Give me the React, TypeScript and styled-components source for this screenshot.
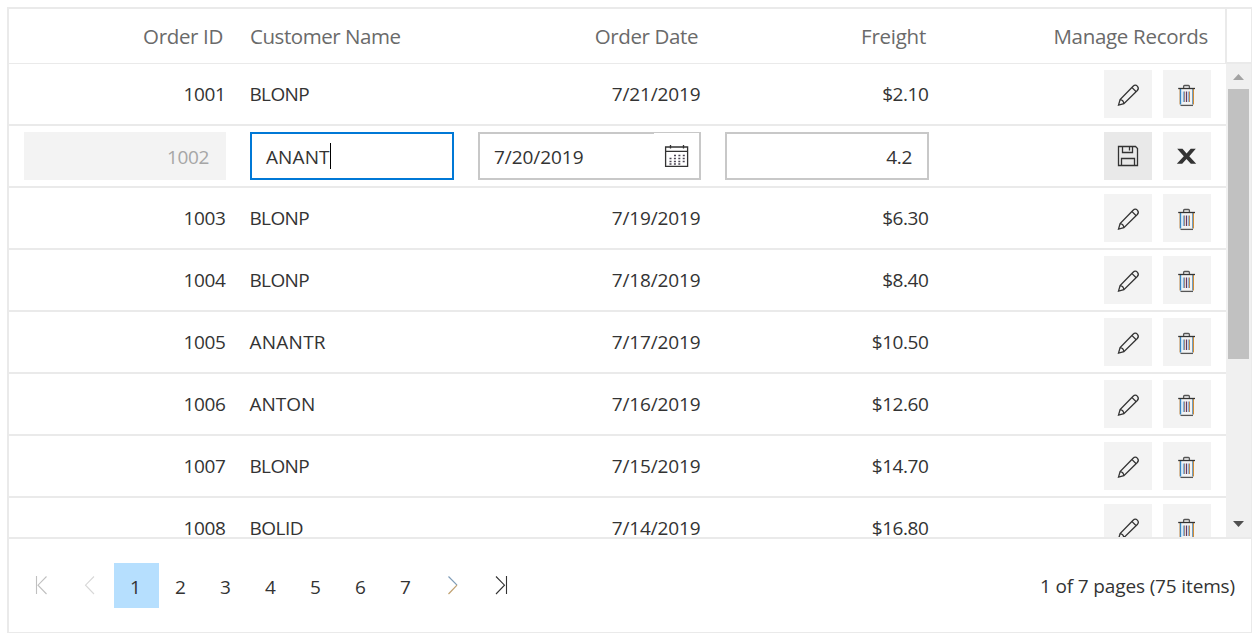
import React from 'react';
import styled, { createGlobalStyle } from 'styled-components';

const Global = createGlobalStyle`
  *, *::before, *::after { box-sizing: border-box; }
  body { margin: 0; background: #fff; font-family: 'Open Sans', 'Noto Sans', sans-serif; color: #333; }
`;

const columns = '229px 228px 247px 228px 285px';

const Grid = styled.div`
  width: 1245px;
  height: 626px;
  margin: 7px 0 0 7px;
  border: 2px solid #eaeaea;
  border-right-width: 1px;
  border-bottom-width: 1px;
  display: flex;
  flex-direction: column;
  overflow: hidden;
`;

const Header = styled.div`
  display: flex;
  height: 55px;
  flex: none;
`;

const HeaderRow = styled.div`
  display: grid;
  grid-template-columns: ${columns};
  width: 1216px;
  border-bottom: 1px solid #eaeaea;
  overflow: hidden;
`;

const HeaderCorner = styled.div`
  flex: 1;
  border-left: 2px solid #eaeaea;
  border-bottom: 2px solid #eaeaea;
`;

const HeaderCell = styled.div<{ $left?: boolean; $pad?: number; $ls: number }>`
  display: flex;
  align-items: center;
  justify-content: ${p => (p.$left ? 'flex-start' : 'flex-end')};
  padding: 0 ${p => p.$pad ?? 15}px 1px 12px;
  font-size: 20.5px;
  line-height: 28px;
  letter-spacing: ${p => p.$ls}px;
  color: #6a6a6a;
  white-space: nowrap;
`;

const Content = styled.div`
  display: flex;
  height: 473px;
  flex: none;
`;

const Rows = styled.div`
  width: 1217px;
  height: 473px;
  overflow: hidden;
`;

const Row = styled.div`
  display: grid;
  grid-template-columns: ${columns};
  height: 62px;
  border-bottom: 2px solid #eaeaea;
`;

const Cell = styled.div<{ $left?: boolean; $ls?: number }>`
  display: flex;
  align-items: center;
  justify-content: ${p => (p.$left ? 'flex-start' : 'flex-end')};
  padding: 0 12.5px 0 11.5px;
  font-size: 19px;
  line-height: 26px;
  letter-spacing: ${p => p.$ls ?? -0.36}px;
  white-space: nowrap;
`;

const EditCell = styled.div<{ $first?: boolean }>`
  display: flex;
  align-items: center;
  padding: 0 12px 0 ${p => (p.$first ? 15 : 12)}px;
`;

const Field = styled.div<{ $kind?: 'focus' | 'disabled'; $right?: boolean; $ls?: number }>`
  display: flex;
  flex: 1;
  align-items: center;
  justify-content: ${p => (p.$right ? 'flex-end' : 'flex-start')};
  height: 48px;
  padding: 2px 15px 0 14px;
  border: 2px solid ${p => (p.$kind === 'focus' ? '#0078d6' : p.$kind === 'disabled' ? '#f3f3f3' : '#c8c8c8')};
  background: ${p => (p.$kind === 'disabled' ? '#f3f3f3' : '#fff')};
  color: ${p => (p.$kind === 'disabled' ? '#a6a6a6' : '#333')};
  font-size: 19px;
  line-height: 26px;
  letter-spacing: ${p => p.$ls ?? -0.36}px;
`;

const Caret = styled.span`
  width: 1px;
  height: 26px;
  background: #000;
  margin-top: -3px;
`;

const DateField = styled(Field)`
  padding-right: 0;
`;

const DateButton = styled.span`
  display: flex;
  width: 45px;
  height: 45px;
  margin: -3px 0 0 auto;
  background: #fff;
`;

const Actions = styled.div`
  display: flex;
  align-items: center;
  justify-content: flex-end;
  gap: 11px;
  padding-right: 15px;
`;

const ActionButton = styled.span<{ $active?: boolean }>`
  display: block;
  width: 48px;
  height: 48px;
  background: ${p => (p.$active ? '#e9e9e9' : '#f3f3f3')};
`;

const Icon = styled.svg`
  display: block;
  fill: none;
  stroke: #333;
  stroke-width: 1.3;
`;

const Scrollbar = styled.div`
  width: 25px;
  display: flex;
  flex-direction: column;
  align-items: center;
  background: #f0f0f0;
`;

const ScrollArrow = styled.svg`
  display: block;
  flex: none;
`;

const Thumb = styled.div`
  width: 21px;
  height: 270px;
  margin-left: -1px;
  background: #c1c1c1;
`;

const Track = styled.div`
  flex: 1;
`;

const Pager = styled.div`
  display: flex;
  align-items: center;
  flex: 1;
  border-top: 2px solid #eaeaea;
  padding: 0 16px 0 9px;
`;

const PagerArrow = styled.span`
  display: block;
  width: 48px;
  height: 45px;
`;

const PageNumber = styled.span<{ $current?: boolean }>`
  display: flex;
  align-items: center;
  justify-content: center;
  width: 45px;
  height: 45px;
  padding: 3px 2px 0 0;
  background: ${p => (p.$current ? '#b6dffe' : 'transparent')};
  font-size: 19px;
  line-height: 26px;
`;

const PagerText = styled.span`
  margin-left: auto;
  padding-top: 0;
  font-size: 19px;
  line-height: 26px;
  letter-spacing: -0.14px;
  white-space: nowrap;
`;

const PencilIcon = () => (
  <Icon width="48" height="48" viewBox="0 0 48 48">
    <path d="M14.5 35.1 L16.1 29.6 L29.1 16.2 C30.6 14.7 32.2 15 33.3 16.1 C34.5 17.3 34.6 19 33.3 20.5 L19.9 33.6 Z M27.8 17.4 L32.2 21.8 M16.1 29.6 C18 29.8 19.6 31.4 19.9 33.6" />
  </Icon>
);

const TrashIcon = () => (
  <Icon width="48" height="48" viewBox="0 0 48 48">
    <path d="M16.5 19 V34.5" stroke="#d8bd9c" strokeWidth="1" />
    <path d="M17.5 19 V34.5" stroke="#3a85c0" strokeWidth="1" />
    <path d="M18.5 19 V34.5" stroke="#c4e2f7" strokeWidth="1" />
    <path d="M29.5 19 V34.5" stroke="#6f9cc0" strokeWidth="1" />
    <path d="M30.5 19 V34.5" stroke="#d08c36" strokeWidth="1" />
    <path d="M17.5 35.4 H30" stroke="#555" />
    <path d="M15.2 18.5 H32" />
    <path d="M20.6 18 V16.5 Q20.6 15.5 21.6 15.5 H25.4 Q26.4 15.5 26.4 16.5 V18" stroke="#555" />
    <path d="M20.5 21.5 V32" stroke="#7fb0dc" />
    <path d="M21.5 21.5 V32" stroke="#a08c80" strokeWidth="1" />
    <path d="M23.5 21.5 V32" stroke="#5f3a66" />
    <path d="M25.5 21.5 V32" stroke="#8fb2d4" strokeWidth="1" />
    <path d="M26.5 21.5 V32" stroke="#c08a50" strokeWidth="1" />
  </Icon>
);

const SaveIcon = () => (
  <Icon width="48" height="48" viewBox="0 0 48 48">
    <path d="M14.5 14.5 H31.5 L33.5 16.5 V33.5 H14.5 Z M18.5 14.5 V20.5 H28.5 V14.5 M25.5 15 V18.5 M17.5 33.5 V26.5 H30.5 V33.5" />
  </Icon>
);

const CancelIcon = () => (
  <Icon width="48" height="48" viewBox="0 0 48 48">
    <path
      d="M14.2 16.7 H19.5 L23.6 21.6 L27.7 16.7 H32.8 L26.3 24.3 L33.2 31.8 H27.8 L23.5 27 L19.2 31.8 H13.8 L20.8 24.2 Z"
      fill="#333"
      stroke="none"
    />
  </Icon>
);

const CalendarIcon = () => (
  <Icon width="45" height="45" viewBox="0 0 45 45">
    <path d="M11.6 14 H33.6 V33.4 H11.6 Z M11.6 18.4 H33.6" />
    <path d="M16.5 12 V15.5 M29.5 12 V15.5" />
    <path
      d="M20 22.5 H32 M15.5 25.5 H32 M15.5 28.5 H32 M15.5 31 H28"
      strokeDasharray="2 2.4"
      stroke="#4a4452"
    />
  </Icon>
);

type Order = { id: string; name: string; date: string; freight: string; ls: number };

const orders: Order[] = [
  { id: '1001', name: 'BLONP', date: '7/21/2019', freight: '$2.10', ls: -0.65 },
  { id: '1002', name: 'ANANT', date: '7/20/2019', freight: '4.2', ls: 0.1 },
  { id: '1003', name: 'BLONP', date: '7/19/2019', freight: '$6.30', ls: -0.65 },
  { id: '1004', name: 'BLONP', date: '7/18/2019', freight: '$8.40', ls: -0.65 },
  { id: '1005', name: 'ANANTR', date: '7/17/2019', freight: '$10.50', ls: 0.25 },
  { id: '1006', name: 'ANTON', date: '7/16/2019', freight: '$12.60', ls: 0 },
  { id: '1007', name: 'BLONP', date: '7/15/2019', freight: '$14.70', ls: -0.65 },
  { id: '1008', name: 'BOLID', date: '7/14/2019', freight: '$16.80', ls: -0.5 },
];

const OrderRow = ({ order }: { order: Order }) => (
  <Row>
    <Cell>{order.id}</Cell>
    <Cell $left $ls={order.ls}>{order.name}</Cell>
    <Cell $ls={-0.14}>{order.date}</Cell>
    <Cell $ls={-0.42}>{order.freight}</Cell>
    <Actions>
      <ActionButton><PencilIcon /></ActionButton>
      <ActionButton><TrashIcon /></ActionButton>
    </Actions>
  </Row>
);

const EditRow = ({ order }: { order: Order }) => (
  <Row>
    <EditCell $first><Field $kind="disabled" $right>{order.id}</Field></EditCell>
    <EditCell><Field $kind="focus" $ls={order.ls}>{order.name}<Caret /></Field></EditCell>
    <EditCell>
      <DateField $ls={-0.06}>{order.date}<DateButton><CalendarIcon /></DateButton></DateField>
    </EditCell>
    <EditCell><Field $right>{order.freight}</Field></EditCell>
    <Actions>
      <ActionButton $active><SaveIcon /></ActionButton>
      <ActionButton><CancelIcon /></ActionButton>
    </Actions>
  </Row>
);

export default function App() {
  return (
    <>
      <Global />
      <Grid>
        <Header>
          <HeaderRow>
            <HeaderCell $ls={-0.35}>Order ID</HeaderCell>
            <HeaderCell $left $ls={-0.45}>Customer Name</HeaderCell>
            <HeaderCell $ls={-0.4}>Order Date</HeaderCell>
            <HeaderCell $ls={-0.25}>Freight</HeaderCell>
            <HeaderCell $ls={-0.3} $pad={18}>Manage Records</HeaderCell>
          </HeaderRow>
          <HeaderCorner />
        </Header>
        <Content>
          <Rows>
            {orders.map(o => (o.id === '1002' ? <EditRow key={o.id} order={o} /> : <OrderRow key={o.id} order={o} />))}
          </Rows>
          <Scrollbar>
            <ScrollArrow width="25" height="25"><path d="M7 16 L12.5 10 L18 16 Z" fill="#a3a3a3" /></ScrollArrow>
            <Thumb />
            <Track />
            <ScrollArrow width="25" height="25"><path d="M7 9 L12.5 15 L18 9 Z" fill="#505050" /></ScrollArrow>
          </Scrollbar>
        </Content>
        <Pager>
          <PagerArrow>
            <Icon width="48" height="45"><path d="M18.5 13 V31 M28.5 13.5 L20 22.2 L28.5 31" stroke="#c0c0c0" strokeWidth="1.1" /></Icon>
          </PagerArrow>
          <PagerArrow>
            <Icon width="48" height="45"><path d="M28 13.5 L19.5 22.2 L28 31" stroke="#d8d8d8" strokeWidth="1.1" /></Icon>
          </PagerArrow>
          {['1', '2', '3', '4', '5', '6', '7'].map(n => (
            <PageNumber key={n} $current={n === '1'}>{n}</PageNumber>
          ))}
          <PagerArrow>
            <Icon width="48" height="45">
              <path d="M19.5 13.5 L28 22.2" stroke="#7f9db8" strokeWidth="1.2" />
              <path d="M28 22.2 L19.5 31" stroke="#c0a070" strokeWidth="1.2" />
            </Icon>
          </PagerArrow>
          <PagerArrow>
            <Icon width="48" height="45"><path d="M29.5 13 V31 M19 13.5 L27.5 22.2 L19 31" strokeWidth="1.1" /></Icon>
          </PagerArrow>
          <PagerText>1 of 7 pages (75 items)</PagerText>
        </Pager>
      </Grid>
    </>
  );
}
